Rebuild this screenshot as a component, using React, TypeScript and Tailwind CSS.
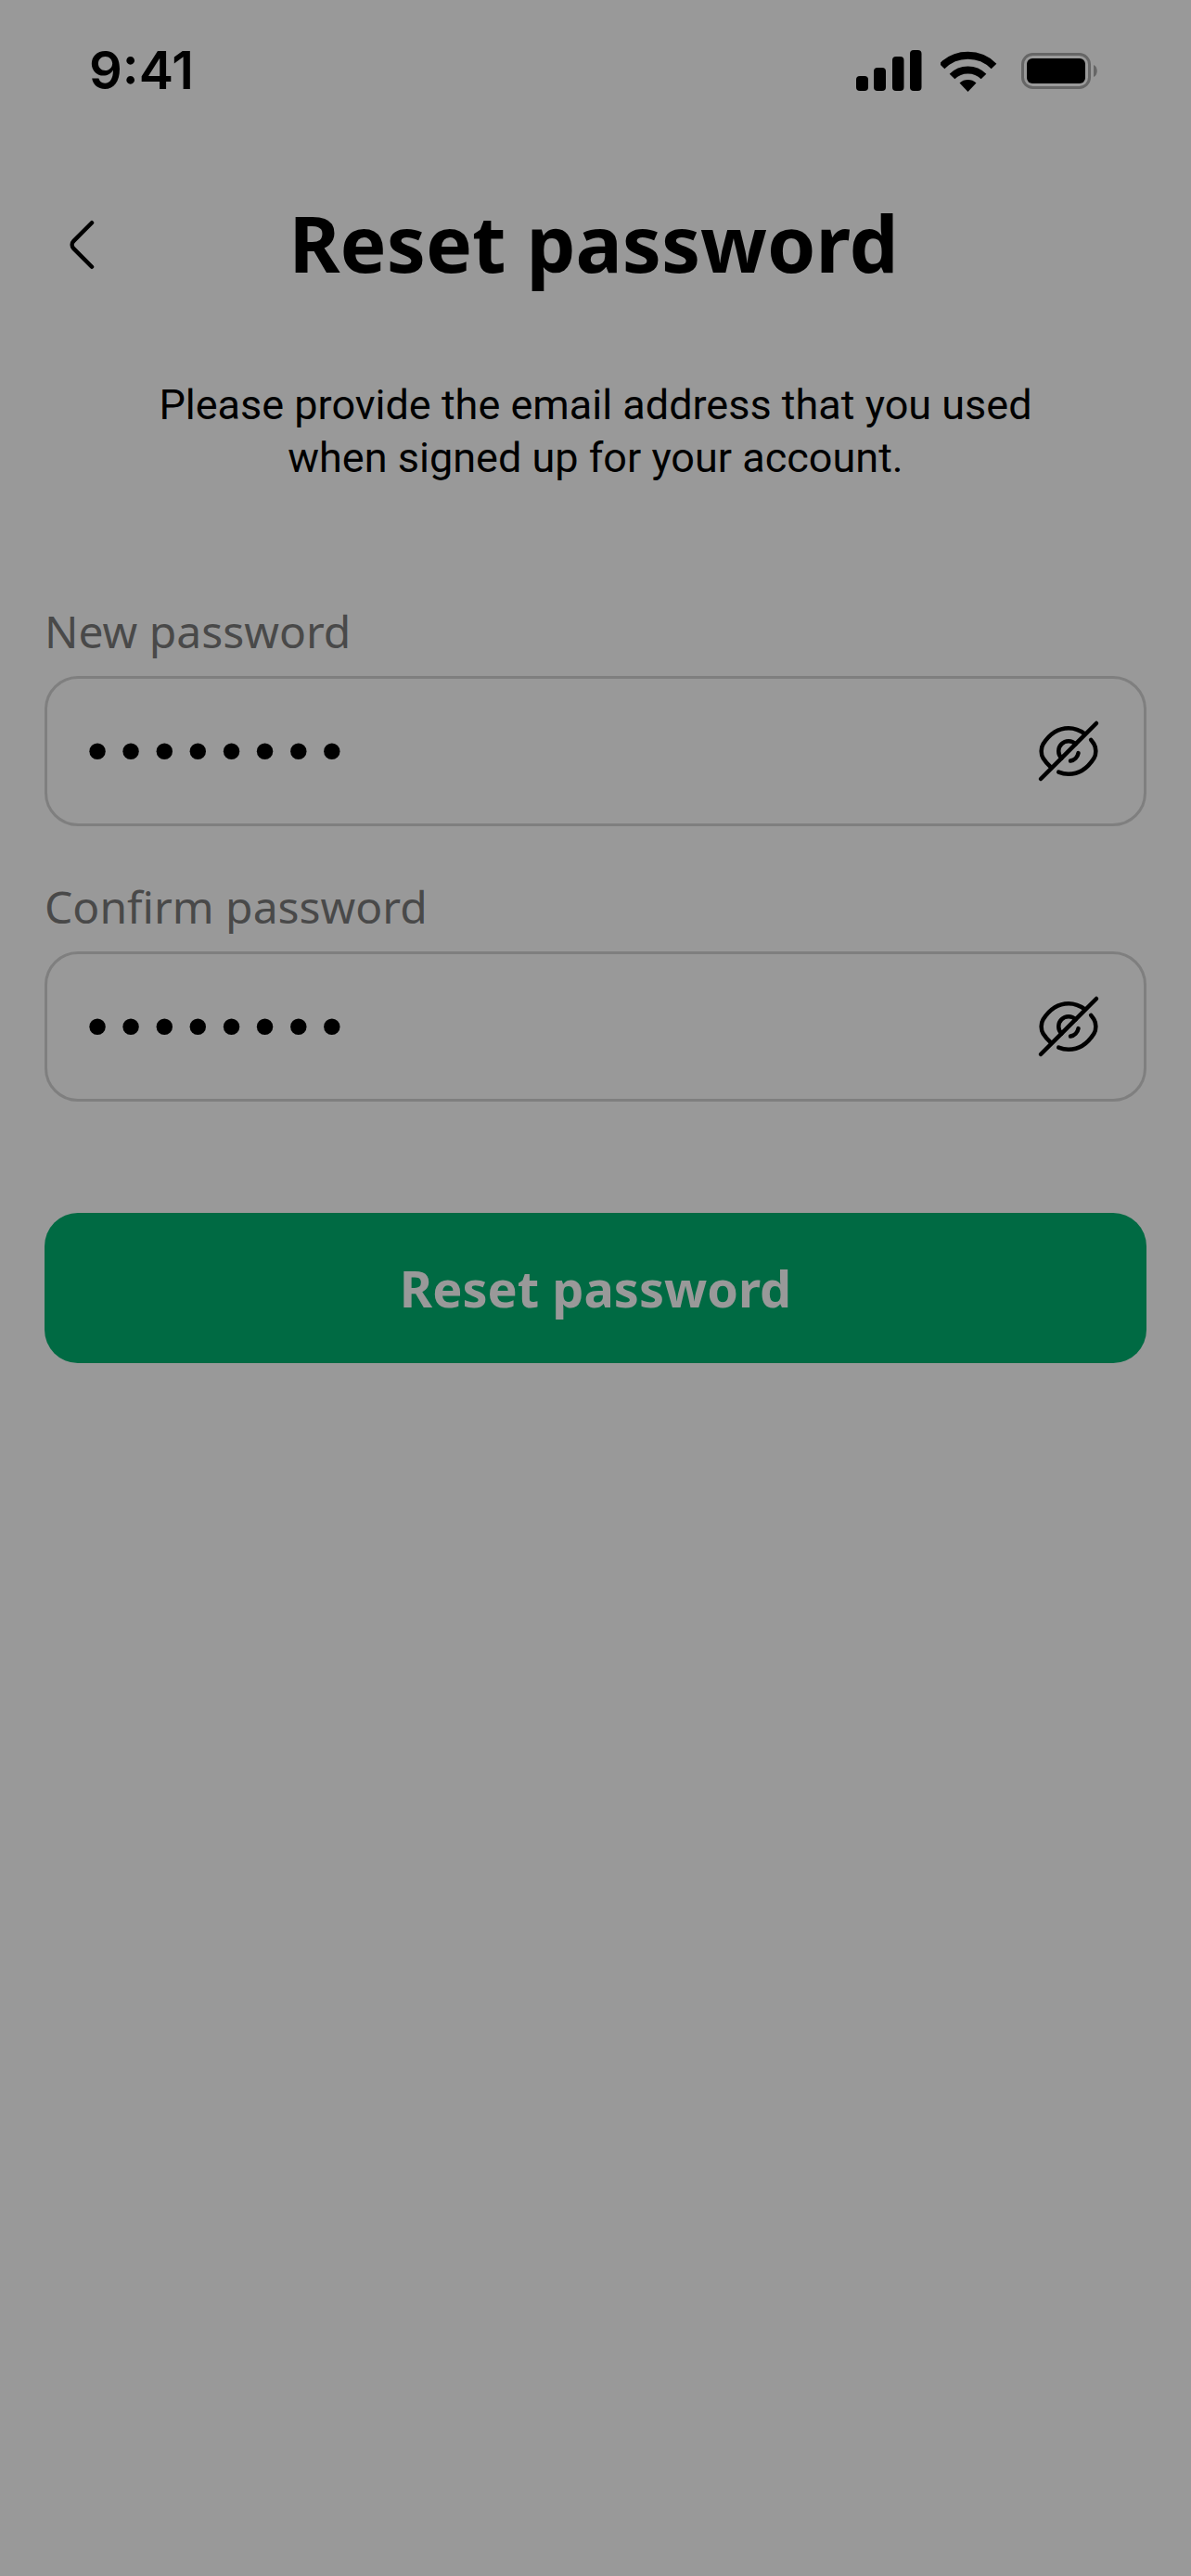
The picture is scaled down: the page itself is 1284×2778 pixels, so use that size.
import React from "react";

function SignalIcon() {
  return (
    <svg className="h-[48px] w-[76px]" viewBox="0 0 76 48" fill="black" aria-hidden="true">
      <rect x="3" y="30" width="13" height="16" rx="4" />
      <rect x="22" y="21" width="13" height="25" rx="4" />
      <rect x="42" y="9" width="12.500" height="37" rx="4" />
      <rect x="61" y="2" width="12.500" height="44" rx="4" />
    </svg>
  );
}

function WifiIcon() {
  return (
    <svg className="h-[48px] w-[68px]" viewBox="0 0 68 48" fill="none" stroke="black" strokeWidth="8" aria-hidden="true">
      <path d="M1.500 19.500A39.500 39.500 0 0 1 57.500 19.500" />
      <path d="M12.500 30.500A24 24 0 0 1 46.500 30.500" />
      <path d="M29.500 47L20.500 37.500A13.500 13.500 0 0 1 38.500 37.500Z" fill="black" stroke="none" />
    </svg>
  );
}

function BatteryIcon() {
  return (
    <svg className="h-[48px] w-[86px]" viewBox="0 0 86 48" aria-hidden="true">
      <rect x="2.500" y="6.500" width="72" height="36" rx="11" fill="none" stroke="#666666" strokeWidth="3" />
      <rect x="7" y="11" width="63" height="27" rx="6" fill="black" />
      <path d="M79 18C84 20 84 29 79 31Z" fill="#666666" />
    </svg>
  );
}

function BackIcon() {
  return (
    <svg className="size-[72px]" viewBox="0 0 24 24" fill="none" stroke="black" strokeWidth="1.5" strokeLinecap="round" strokeLinejoin="round" aria-hidden="true">
      <path d="M15 19.92L8.48 13.4C7.71 12.63 7.71 11.37 8.48 10.6L15 4.08" />
    </svg>
  );
}

function EyeSlashIcon() {
  return (
    <svg className="size-[72px]" viewBox="0 0 24 24" fill="none" stroke="black" strokeWidth="1.5" strokeLinecap="round" strokeLinejoin="round" aria-hidden="true">
      <path d="M14.53 9.47L9.47 14.53C8.82 13.88 8.42 12.99 8.42 12C8.42 10.02 10.02 8.42 12 8.42C12.99 8.42 13.88 8.82 14.53 9.47Z" />
      <path d="M17.82 5.77C16.07 4.45 14.07 3.73 12 3.73C8.47 3.73 5.18 5.81 2.89 9.41C1.99 10.82 1.99 13.19 2.89 14.6C3.68 15.84 4.6 16.91 5.6 17.77" />
      <path d="M8.42 19.53C9.56 20.01 10.77 20.27 12 20.27C15.53 20.27 18.82 18.19 21.11 14.59C22.01 13.18 22.01 10.81 21.11 9.4C20.78 8.88 20.42 8.39 20.05 7.93" />
      <path d="M15.51 12.7C15.25 14.11 14.1 15.26 12.69 15.52" />
      <path d="M9.47 14.53L2 22" />
      <path d="M22 2L14.53 9.47" />
    </svg>
  );
}

function PasswordField({ id, label }: { id: string; label: string }) {
  return (
    <div>
      <label htmlFor={id} className="block text-5xl leading-[66px] text-[#494949]">
        {label}
      </label>
      <div className="mt-[15px] flex h-[162px] items-center rounded-[36px] border-[3px] border-[#7f7f7f] pr-[45px] pl-9">
        <input
          id={id}
          type="password"
          defaultValue="password"
          className="h-full min-w-0 flex-1 bg-transparent pt-1 font-['DejaVu_Sans_Mono',monospace] text-6xl text-black outline-none"
        />
        <button type="button" aria-label={`Show ${label.toLowerCase()}`}>
          <EyeSlashIcon />
        </button>
      </div>
    </div>
  );
}

export default function App() {
  return (
    <div className="min-h-screen bg-[#999999] font-['Noto_Sans',sans-serif] text-black">
      <div className="flex h-[152px] items-center justify-between pr-[98px] pl-24">
        <span className="font-['Inter',sans-serif] text-[56px] font-semibold">9:41</span>
        <div className="flex items-center gap-[18px]">
          <SignalIcon />
          <WifiIcon />
          <BatteryIcon />
        </div>
      </div>
      <header className="grid grid-cols-[72px_1fr_72px] items-center pt-[52px] pr-[58px] pl-[54px]">
        <button type="button" aria-label="Back">
          <BackIcon />
        </button>
        <h1 className="pb-1 text-center text-[84px] leading-[116px] font-bold">Reset password</h1>
      </header>
      <main className="px-12 pt-[84px]">
        <p className="mx-auto max-w-[1000px] text-center font-['Roboto',sans-serif] text-[45px] leading-[57px]">
          Please provide the email address that you used when signed up for your account.
        </p>
        <form className="mt-[126px]" onSubmit={(e) => e.preventDefault()}>
          <div className="flex flex-col gap-[54px]">
            <PasswordField id="new-password" label="New password" />
            <PasswordField id="confirm-password" label="Confirm password" />
          </div>
          <button type="submit" className="mt-[120px] h-[162px] w-full rounded-[36px] bg-[#006a43] text-[54px] font-bold text-[#999999]">
            Reset password
          </button>
        </form>
      </main>
    </div>
  );
}
